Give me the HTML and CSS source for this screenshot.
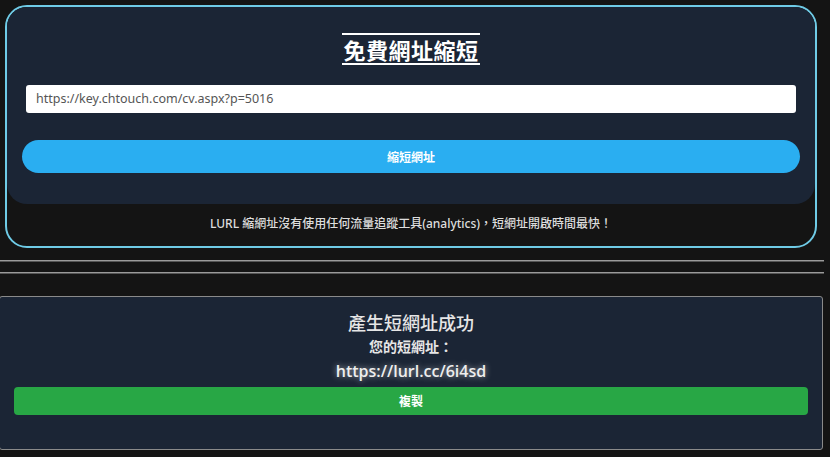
FILE: index.html
```html
<!DOCTYPE html>
<html lang="zh-Hant">
<head>
<meta charset="utf-8">
<title>免費網址縮短</title>
<link rel="stylesheet" href="styles.css">
</head>
<body>
<div class="page">
  <section class="hero">
    <div class="panel">
      <h1 class="title">免費網址縮短</h1>
      <div class="input">https://key.chtouch.com/cv.aspx?p=5016</div>
      <div class="btn-shorten">縮短網址</div>
    </div>
    <p class="note">LURL 縮網址沒有使用任何流量追蹤工具(analytics)，短網址開啟時間最快！</p>
  </section>
  <div class="rule rule-a"></div>
  <div class="rule rule-b"></div>
  <section class="result">
    <h2 class="result-title">產生短網址成功</h2>
    <div class="result-label">您的短網址：</div>
    <div class="result-url">https://lurl.cc/6i4sd</div>
    <div class="btn-copy">複製</div>
  </section>
</div>
</body>
</html>
```
FILE: styles.css
```css
html, body {
  margin: 0;
  padding: 0;
  background: #141414;
  font-family: "Noto Sans", "Noto Sans CJK TC", sans-serif;
  color: #fff;
}
.page {
  width: 824px;
  padding-top: 5px;
}
.hero {
  width: 808px;
  margin-left: 5px;
  border: 2px solid #6fcbe6;
  border-radius: 22px;
  overflow: hidden;
}
.panel {
  background: #1b2535;
  border-radius: 0 0 20px 20px;
  height: 197px;
  padding-top: 26px;
  box-sizing: border-box;
  display: flex;
  flex-direction: column;
  align-items: center;
}
.title {
  margin: 0;
  font-family: "Noto Sans CJK TC", sans-serif;
  font-size: 22px;
  font-weight: 700;
  line-height: 26px;
  padding: 1px 1px 1px;
  border-top: 2px solid #fff;
  border-bottom: 2px solid #fff;
  letter-spacing: 0.5px;
}
.input {
  align-self: stretch;
  margin: 20px 19px 0 19px;
  height: 28px;
  box-sizing: border-box;
  background: #fff;
  border-radius: 3px;
  color: #555;
  font-size: 12.5px;
  line-height: 28px;
  padding-left: 10px;
}
.btn-shorten {
  align-self: stretch;
  margin: 27px 15px 0 15px;
  height: 33px;
  background: #2aaef1;
  border-radius: 17px;
  font-family: "Noto Sans CJK TC", sans-serif;
  font-size: 12px;
  font-weight: 700;
  line-height: 33px;
  text-align: center;
  color: #fff;
}
.note {
  margin: 0;
  height: 42px;
  line-height: 40px;
  text-align: center;
  font-size: 12px;
  font-weight: 500;
  color: #ddd;
  font-family: "Noto Sans", "Noto Sans CJK TC", sans-serif;
}
.rule {
  width: 824px;
  height: 0;
  border-top: 1px solid #9a9a9a;
  border-bottom: 1px solid #555;
}
.rule-a { margin-top: 12px; }
.rule-b { margin-top: 10px; }
.result {
  margin-top: 22px;
  width: 824px;
  margin-left: -1px;
  box-sizing: border-box;
  height: 154px;
  background: #1b2535;
  border: 1px solid #8a8a8a;
  border-radius: 3px;
  padding: 12px 14px 0 14px;
  text-align: center;
}
.result-title {
  margin: 0;
  font-family: "Noto Sans CJK TC", sans-serif;
  font-size: 18px;
  font-weight: 500;
  line-height: 26px;
  color: #e6e6e6;
}
.result-label {
  font-family: "Noto Sans CJK TC", sans-serif;
  font-size: 14px;
  font-weight: 700;
  line-height: 22px;
  color: #e6e6e6;
}
.result-url {
  font-family: "Open Sans", "Noto Sans", sans-serif;
  font-size: 16px;
  font-weight: 600;
  line-height: 28px;
  color: #eee;
  text-shadow: 0 0 6px rgba(255,255,255,0.6);
}
.btn-copy {
  margin-top: 2px;
  height: 28px;
  background: #28a745;
  border-radius: 4px;
  font-family: "Noto Sans CJK TC", sans-serif;
  font-size: 12px;
  font-weight: 700;
  line-height: 28px;
  color: #fff;
}
```
